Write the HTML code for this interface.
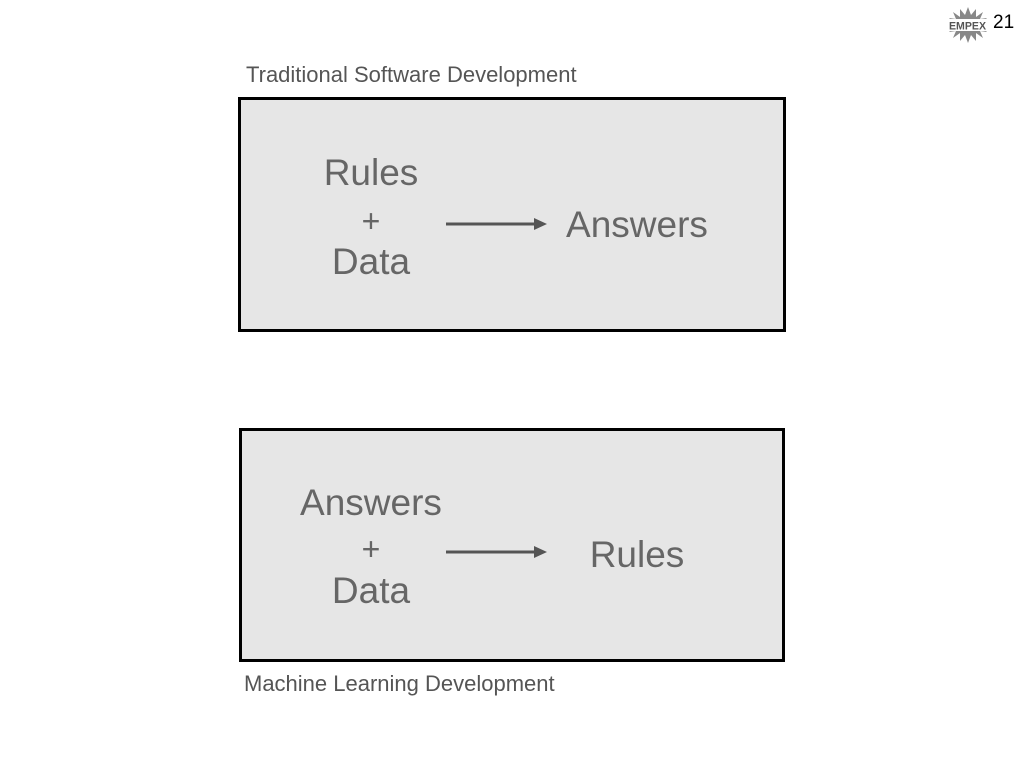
<!DOCTYPE html>
<html><head><style>
body{margin:0;width:1024px;height:768px;background:#fff;position:relative;overflow:hidden;font-family:"Liberation Sans",sans-serif;}
.lbl{position:absolute;font-size:22px;color:#555;white-space:nowrap}
.box{position:absolute;background:#e6e6e6;border:3px solid #000;box-sizing:border-box}
.t{position:absolute;font-size:37px;color:#666;text-align:center;white-space:nowrap;transform:translateX(-50%);line-height:1}
svg{position:absolute}
</style></head><body>
<svg style="left:946px;top:6px" width="44" height="38" viewBox="0 0 44 38">
<polygon points="22,1 25,9 30,3 30,11 37,6 34,13 41,12 36,17 22,19 8,17 3,12 10,13 7,6 14,11 14,3 19,9" fill="#888"/>
<polygon points="22,37 25,29 30,35 30,27 37,32 34,25 41,26 36,21 22,19 8,21 3,26 10,25 7,32 14,27 14,35 19,29" fill="#888"/>
<rect x="2" y="13" width="40" height="12" fill="#fff"/>
<text x="3" y="23.5" font-size="11" font-weight="bold" fill="#555" textLength="37" lengthAdjust="spacingAndGlyphs" font-family="Liberation Sans">EMPEX</text>
</svg>
<div class="lbl" style="left:993px;top:12px;color:#000;font-size:19px">21</div>
<div class="lbl" style="left:246px;top:62px">Traditional Software Development</div>
<div class="box" style="left:238px;top:97px;width:548px;height:235px"></div>
<div class="t" style="left:371px;top:154px">Rules</div>
<div class="t" style="left:371px;top:205px;font-size:32px">+</div>
<div class="t" style="left:371px;top:243px">Data</div>
<div class="t" style="left:637px;top:206px">Answers</div>
<svg style="left:444px;top:214px" width="106" height="20"><line x1="2" y1="10" x2="92" y2="10" stroke="#555" stroke-width="3"/><polygon points="90,4 103,10 90,16" fill="#555"/></svg>
<div class="box" style="left:239px;top:428px;width:546px;height:234px"></div>
<div class="t" style="left:371px;top:484px">Answers</div>
<div class="t" style="left:371px;top:533px;font-size:32px">+</div>
<div class="t" style="left:371px;top:572px">Data</div>
<div class="t" style="left:637px;top:536px">Rules</div>
<svg style="left:444px;top:542px" width="106" height="20"><line x1="2" y1="10" x2="92" y2="10" stroke="#555" stroke-width="3"/><polygon points="90,4 103,10 90,16" fill="#555"/></svg>
<div class="lbl" style="left:244px;top:671px">Machine Learning Development</div>
</body></html>
